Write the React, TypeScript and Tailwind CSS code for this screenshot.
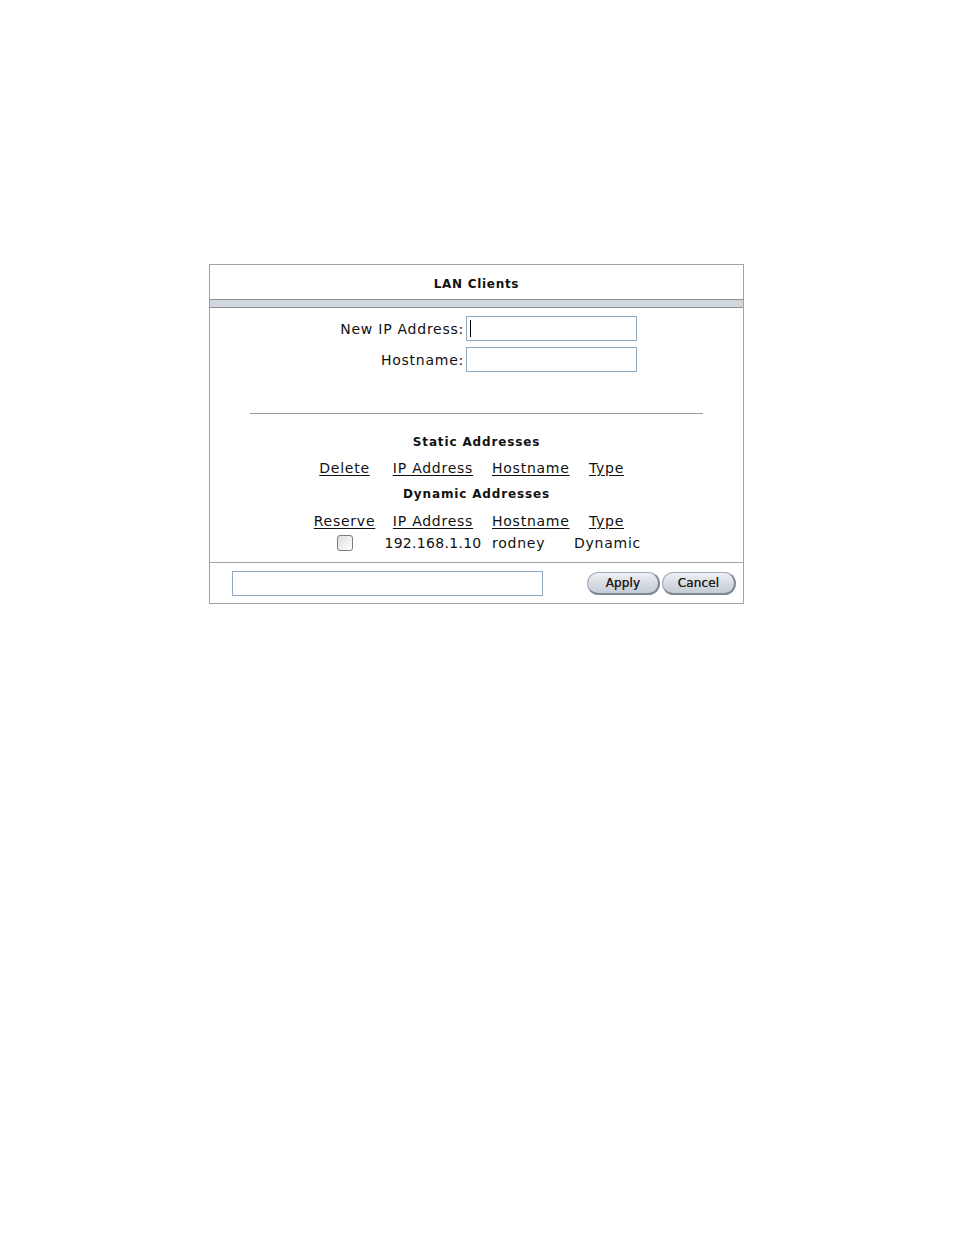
import React from "react";

const font = { fontFamily: '"DejaVu Sans", Verdana, sans-serif' };

function Btn({ label, w }: { label: string; w: string }) {
  return (
    <div
      className={`${w} h-[23px] rounded-full border border-[#a3abb5] border-r-[2px] border-b-[2px] border-r-[#808992] border-b-[#808992] bg-gradient-to-b from-[#eef1f4] via-[#d7dce3] to-[#c5ccd5] flex items-center justify-center pt-[1px] text-[12px] tracking-[0.1px] text-[#222] [text-shadow:0_0_0.4px_#222]`}
    >
      {label}
    </div>
  );
}

const body = "text-[14px] tracking-[0.75px] leading-[16px]";
const head = "text-center text-[12px] font-bold tracking-[0.85px] leading-[16px]";

function Row({ children }: { children: React.ReactNode }) {
  return <div className={`flex pl-[102px] ${body}`}>{children}</div>;
}

export default function App() {
  return (
    <div className="w-[954px] h-[1235px] bg-white pt-[264px] pl-[209px] text-[#111]" style={font}>
      <div className="w-[535px] border border-[#a3a3a3]">
        <div className="h-[34px] pt-[3px] flex items-center justify-center text-[12px] font-bold tracking-[0.7px]">LAN Clients</div>
        <div className="h-[9px] border-y border-[#8f8f8f] bg-[#d3d8df]" />
        <div className="pt-[8px]">
          <div className="flex items-center h-[25px]">
            <div className={`w-[254px] text-right ${body}`}>New IP Address:</div>
            <div className="ml-[2px] w-[171px] h-[25px] border border-[#8fa8c4] flex items-center pl-[3px]">
              <div className="w-[1px] h-[17px] bg-black" />
            </div>
          </div>
          <div className="flex items-center h-[25px] mt-[6px]">
            <div className={`w-[254px] text-right ${body}`}>Hostname:</div>
            <div className="ml-[2px] w-[171px] h-[25px] border border-[#8fa8c4]" />
          </div>
          <div className="mx-[40px] mt-[41px] h-[1px] bg-[#9a9a9a]" />
          <div className={`mt-[20px] ${head}`}>Static Addresses</div>
          <div className="mt-[10px]">
            <Row>
              <div className="w-[65px] text-center underline underline-offset-2">Delete</div>
              <div className="w-[112px] text-center underline underline-offset-2">IP Address</div>
              <div className="w-[85px] underline underline-offset-2 pl-[3px]">Hostname</div>
              <div className="w-[65px] text-center underline underline-offset-2">Type</div>
            </Row>
          </div>
          <div className={`mt-[10px] ${head}`}>Dynamic Addresses</div>
          <div className="mt-[11px]">
            <Row>
              <div className="w-[65px] text-center underline underline-offset-2">Reserve</div>
              <div className="w-[112px] text-center underline underline-offset-2">IP Address</div>
              <div className="w-[85px] underline underline-offset-2 pl-[3px]">Hostname</div>
              <div className="w-[65px] text-center underline underline-offset-2">Type</div>
            </Row>
          </div>
          <div className="mt-[6px]">
            <Row>
              <div className="w-[65px] flex justify-center items-center">
                <div className="w-[16px] h-[16px] rounded-[3px] border border-[#7a7a7a] bg-gradient-to-br from-[#dcdcdc] to-white" />
              </div>
              <div className="w-[112px] text-center tracking-[0.3px]">192.168.1.10</div>
              <div className="w-[85px] pl-[3px]">rodney</div>
              <div className="w-[65px] text-center">Dynamic</div>
            </Row>
          </div>
          <div className="h-[11px]" />
        </div>
        <div className="border-t border-[#a3a3a3] h-[41px] flex items-center pl-[22px] pr-[7px]">
          <div className="w-[311px] h-[25px] border border-[#8fa8c4]" />
          <div className="ml-auto flex gap-[2px]">
            <Btn label="Apply" w="w-[73px]" />
            <Btn label="Cancel" w="w-[74px]" />
          </div>
        </div>
      </div>
    </div>
  );
}
